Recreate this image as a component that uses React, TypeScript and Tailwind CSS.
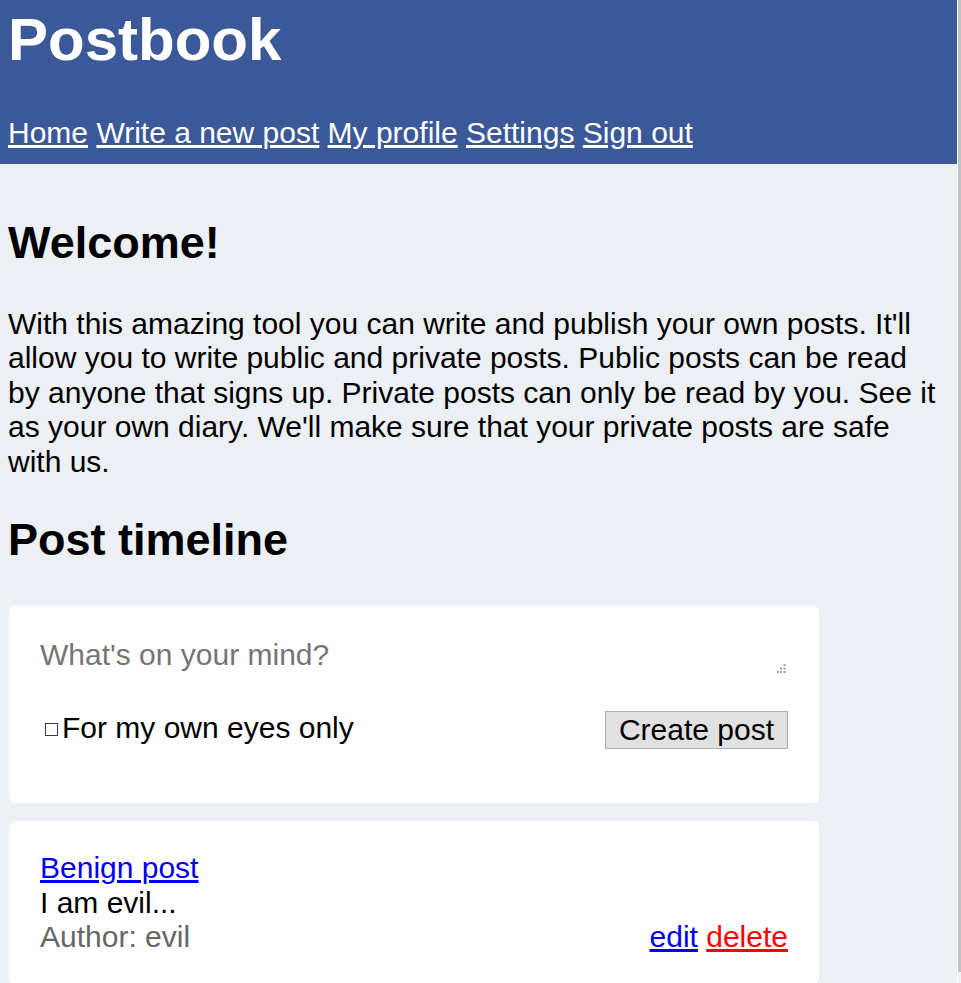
import React from 'react';

const font = { fontFamily: '"Liberation Sans", Arial, sans-serif' };

// Windows-style dotted resize grip drawn over the textarea corner
function ResizeGrip() {
  return (
    <svg className="pointer-events-none absolute right-[2px] bottom-[2px]" width="9" height="9" viewBox="0 0 9 9">
      <rect x="6.5" y="0" width="2" height="2" fill="#a0a0a0" />
      <rect x="3" y="3.5" width="2" height="2" fill="#a0a0a0" />
      <rect x="6.5" y="3.5" width="2" height="2" fill="#a0a0a0" />
      <rect x="0" y="7" width="2" height="2" fill="#a0a0a0" />
      <rect x="3" y="7" width="2" height="2" fill="#a0a0a0" />
      <rect x="6.5" y="7" width="2" height="2" fill="#a0a0a0" />
    </svg>
  );
}

export default function App() {
  return (
    <div className="flex h-[983px] overflow-hidden bg-[#eceff4]" style={font}>
      <div className="w-[957px] shrink-0">
        {/* Header */}
        <header className="bg-[#3b5998] px-[8px] pt-[5px] pb-[13px] text-white">
          <h1 className="text-[60px] leading-[69px] font-bold">Postbook</h1>
          <nav className="mt-[42px] text-[30px] leading-[34.5px]">
            <a href="#" className="underline">Home</a>{' '}
            <a href="#" className="underline">Write a new post</a>{' '}
            <a href="#" className="underline">My profile</a>{' '}
            <a href="#" className="underline">Settings</a>{' '}
            <a href="#" className="underline">Sign out</a>
          </nav>
        </header>

        {/* Content */}
        <main className="px-[8px] text-black">
          <h2 className="mt-[53px] text-[45px] leading-[52px] font-bold">Welcome!</h2>
          <p className="mt-[38px] w-[932px] text-[30px] leading-[34.5px]">
            With this amazing tool you can write and publish your own posts. It'll allow you to write public and
            private posts. Public posts can be read by anyone that signs up. Private posts can only be read by you.
            See it as your own diary. We'll make sure that your private posts are safe with us.
          </p>
          <h2 className="mt-[35px] text-[45px] leading-[52px] font-bold">Post timeline</h2>

          {/* New post */}
          <div className="ml-px mt-[40px] h-[197px] w-[810px] rounded-[6px] bg-white px-[31px] pt-[28px]">
            <div className="relative w-[748px]">
              <textarea
                placeholder="What's on your mind?"
                rows={1}
                className="block h-[41px] w-[748px] resize-none bg-white pt-[4px] text-[30px] leading-[34.5px] outline-none placeholder:text-[#757575]"
              />
              <ResizeGrip />
            </div>
            <div className="mt-[34px] flex items-start justify-between">
              <label className="pt-[2px] text-[30px] leading-[34.5px]">
                <input
                  type="checkbox"
                  className="mr-[4px] mb-[2px] ml-[5px] h-[13px] w-[13px] appearance-none border border-[#3c3c3c] bg-white"
                />
                For my own eyes only
              </label>
              <button className="mt-[2px] h-[38px] border border-[#adadad] bg-[#e1e1e1] px-[13px] text-[30px] leading-[34.5px]">
                Create post
              </button>
            </div>
          </div>

          {/* Post */}
          <div className="ml-px mt-[18px] w-[810px] rounded-[6px] bg-white px-[31px] pt-[30px] pb-[29px] text-[30px] leading-[34.5px]">
            <a href="#" className="text-[#0000ee] underline">Benign post</a>
            <div>I am evil...</div>
            <div className="flex justify-between">
              <span className="text-[#666666]">Author: evil</span>
              <span>
                <a href="#" className="text-[#0000ee] underline">edit</a>{' '}
                <a href="#" className="text-[#ff0000] underline">delete</a>
              </span>
            </div>
          </div>
        </main>
      </div>

      {/* Scrollbar */}
      <div className="flex w-[4px] shrink-0 flex-col border-l border-white">
        <div className="h-[972px] bg-[#c1c1c1]" />
        <div className="flex-1 bg-[#f1f1f1]" />
      </div>
    </div>
  );
}
